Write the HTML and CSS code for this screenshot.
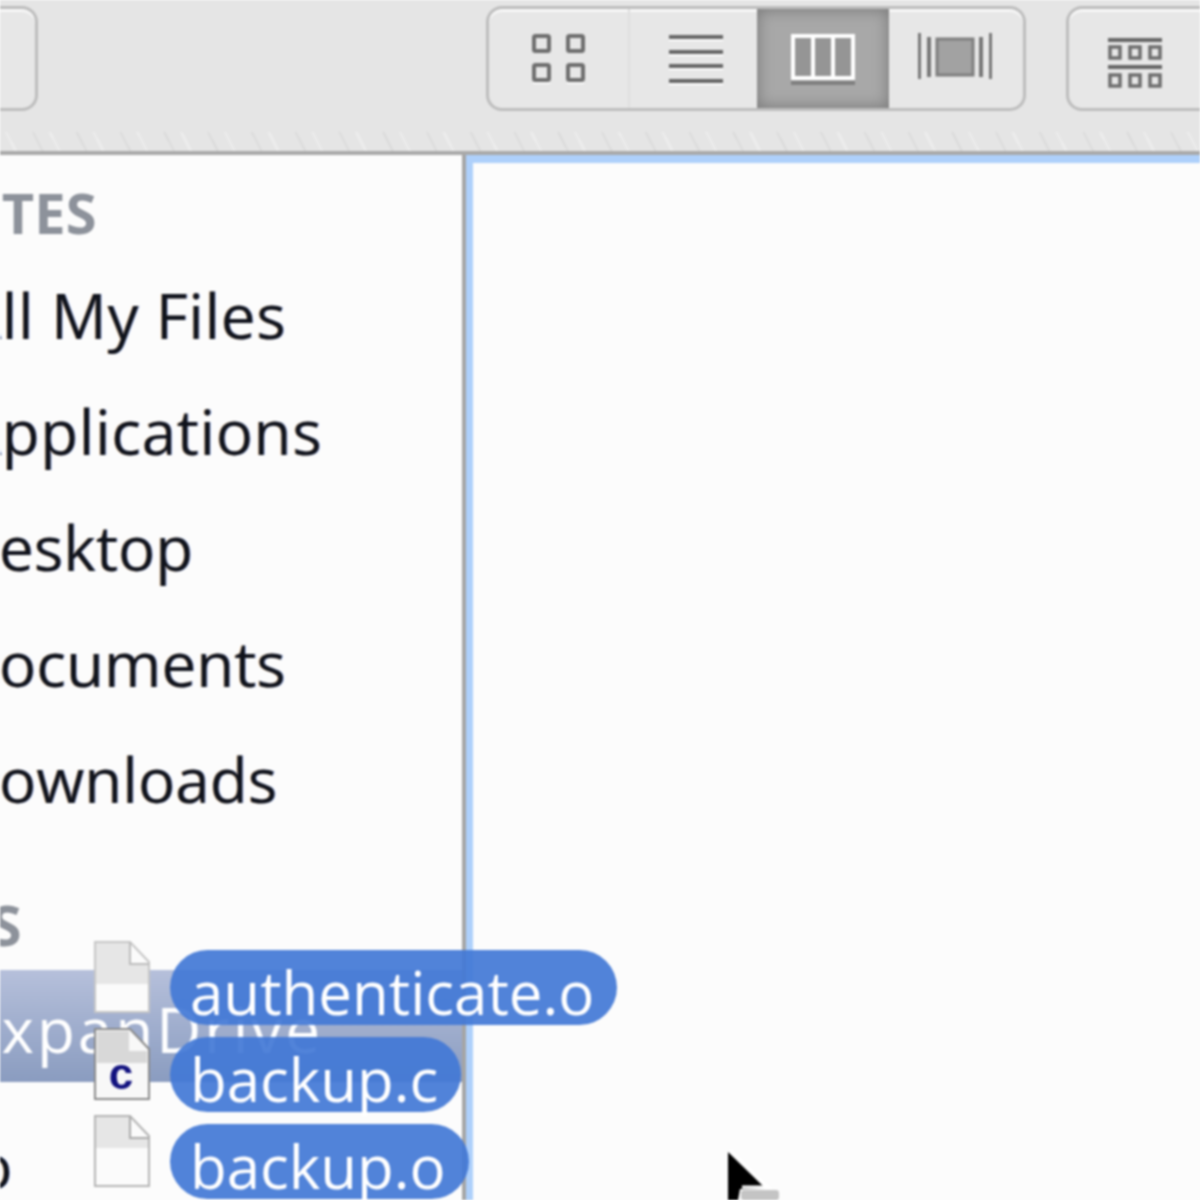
FILE: index.html
```html
<!DOCTYPE html>
<html lang="en">
<head>
<meta charset="utf-8">
<title>Finder</title>
<link rel="stylesheet" href="styles.css">
</head>
<body>
<div class="window">
  <header class="toolbar">
    <div class="btn back"></div>
    <div class="views">
      <div class="seg seg-icon">
        <svg width="56" height="50" viewBox="0 0 56 50"><g fill="none" stroke="#6e6e6e" stroke-width="4"><rect x="3" y="2" width="15" height="15" rx="1.5"/><rect x="37" y="2" width="15" height="15" rx="1.5"/><rect x="3" y="31" width="15" height="15" rx="1.5"/><rect x="37" y="31" width="15" height="15" rx="1.5"/></g><g fill="#fafafa"><rect x="2" y="48" width="17" height="2"/><rect x="36" y="48" width="17" height="2"/></g></svg>
      </div>
      <div class="seg seg-list">
        <svg width="56" height="52" viewBox="0 0 56 52"><g fill="#666"><rect x="1" y="2" width="54" height="4"/><rect x="1" y="17" width="54" height="4"/><rect x="1" y="31" width="54" height="4"/><rect x="1" y="46" width="54" height="4"/></g><g fill="#fff"><rect x="1" y="6" width="54" height="2"/><rect x="1" y="21" width="54" height="2"/><rect x="1" y="35" width="54" height="2"/><rect x="1" y="50" width="54" height="2"/></g></svg>
      </div>
      <div class="seg seg-col">
        <svg width="68" height="56" viewBox="0 0 68 56"><rect x="2" y="3" width="64" height="46" fill="#fff"/><g fill="#959595"><rect x="6" y="7" width="16" height="38"/><rect x="26" y="7" width="16" height="38"/><rect x="46" y="7" width="16" height="38"/></g><rect x="2" y="50" width="64" height="4" fill="#808080"/></svg>
      </div>
      <div class="seg seg-flow">
        <svg width="76" height="56" viewBox="0 0 76 56"><g fill="#777"><rect x="0" y="2" width="3" height="46"/><rect x="71" y="2" width="3" height="46"/><rect x="9" y="6" width="4" height="40"/><rect x="61" y="6" width="4" height="40"/></g><rect x="19" y="8" width="36" height="36" fill="#a2a2a2" stroke="#7e7e7e" stroke-width="3"/></svg>
      </div>
    </div>
    <div class="btn arrange">
      <svg width="56" height="56" viewBox="0 0 56 56"><g fill="#666"><rect x="0" y="2" width="54" height="4"/><rect x="0" y="29" width="54" height="4"/></g><g fill="none" stroke="#6e6e6e" stroke-width="3.5"><rect x="2" y="11" width="10" height="11"/><rect x="22" y="11" width="10" height="11"/><rect x="42" y="11" width="10" height="11"/><rect x="2" y="39" width="10" height="11"/><rect x="22" y="39" width="10" height="11"/><rect x="42" y="39" width="10" height="11"/></g></svg>
    </div>
  </header>
  <main class="body">
    <nav class="sidebar">
      <h2 class="head head-fav">FAVORITES</h2>
      <div class="item item-a">All My Files</div>
      <div class="item item-a">Applications</div>
      <div class="item item-d">Desktop</div>
      <div class="item item-d">Documents</div>
      <div class="item item-d">Downloads</div>
      <h2 class="head head-dev">DEVICES</h2>
      <div class="item selected">ExpanDrive</div>
      <div class="item last">Video</div>
    </nav>
    <section class="pane"></section>
  </main>
  <div class="drag">
    <div class="drag-row">
      <svg class="doc" width="58" height="76" viewBox="0 0 58 76"><path d="M2 2H37L56 22V72H2Z" fill="#fbfbfb" stroke="#c6c6c6" stroke-width="2"/><path d="M3 3H37V24H55V44H3Z" fill="#e6e6e6"/><path d="M37 2V24H56" fill="none" stroke="#bbb" stroke-width="2"/></svg>
      <span class="pill">authenticate.o</span>
    </div>
    <div class="drag-row">
      <svg class="doc" width="58" height="76" viewBox="0 0 58 76"><path d="M2 2H37L56 22V72H2Z" fill="#f8f8f8" stroke="#8a8a8a" stroke-width="2"/><path d="M4 4H36V24H54V36H4Z" fill="#d8d8d8"/><text x="28" y="62" class="doc-c">c</text></svg>
      <span class="pill">backup.c</span>
    </div>
    <div class="drag-row">
      <svg class="doc" width="58" height="76" viewBox="0 0 58 76"><path d="M2 2H37L56 22V72H2Z" fill="#fbfbfb" stroke="#b4b4b4" stroke-width="2"/><path d="M3 3H37V24H55V34H3Z" fill="#e6e6e6"/><path d="M37 2V24H56" fill="none" stroke="#aaa" stroke-width="2"/></svg>
      <span class="pill">backup.o</span>
    </div>
  </div>
  <svg class="cursor" width="70" height="52" viewBox="0 0 70 52"><rect x="25" y="42" width="38" height="10" rx="3" fill="#c4c4c4"/><path d="M12 4V52H22L24 41L49 40Z" fill="#000"/><path d="M14 2L52 39H26" fill="none" stroke="#fff" stroke-width="3"/></svg>
</div>
</body>
</html>
```
FILE: styles.css
```css
* { box-sizing: border-box; }
html, body { margin: 0; padding: 0; }
body { width: 1200px; height: 1200px; overflow: hidden; background: #fcfcfc; font-family: "Open Sans", "DejaVu Sans", sans-serif; }
.window { position: relative; width: 1200px; height: 1200px; overflow: hidden; filter: blur(1px); }

.toolbar { height: 155px; padding-top: 6px; display: flex; align-items: flex-start; border-bottom: 4px solid #a9a9a9; background:
  repeating-linear-gradient(63deg, transparent 0 13px, rgba(255,255,255,.35) 13px 15px, transparent 15px 37px, rgba(190,190,190,.25) 37px 39px) 0 132px / 100% 19px no-repeat,
  #e5e5e5; }
.btn, .views { flex: none; height: 105px; border: 3px solid #bdbdbd; border-radius: 16px; background: #e7e7e7; box-shadow: inset 0 3px 0 #f7f7f7; }
.back { width: 60px; margin-left: -22px; }
.views { display: flex; width: 540px; margin-left: 448px; overflow: hidden; }
.arrange { width: 200px; margin-left: 40px; padding: 27px 0 0 39px; }
.seg { height: 100%; display: flex; align-items: center; justify-content: center; }
.seg-icon { width: 139px; }
.seg-list { width: 129px; border-left: 2px solid #dedede; padding-left: 4px; }
.seg-col { width: 132px; background: #a8a8a8; box-shadow: inset 0 0 14px 2px #7e7e7e; }
.seg-flow { flex: 1; }

.body { display: flex; height: 1045px; }
.sidebar { width: 462px; flex: none; overflow: hidden; background: #fcfcfc; }
.head { margin: 0 0 0 -204px; height: 102px; padding-top: 17px; font-size: 56px; font-weight: 700; line-height: 80px; color: #8d929b; white-space: nowrap; }
.head-dev { margin-top: 29px; height: 104px; padding-top: 18px; }
.item { height: 116px; line-height: 116px; font-size: 62px; color: #10131c; white-space: nowrap; text-shadow: -1px 0 rgba(240,140,20,.35), 1px 0 rgba(20,90,240,.35); }
.item-a { margin-left: -38px; letter-spacing: .6px; }
.item-d { margin-left: -46px; }
.item.selected { height: 112px; line-height: 118px; text-indent: -36px; letter-spacing: 3px; color: #fff; background: linear-gradient(#b6c0db, #8a9cc0); text-shadow: none; }
.item.last { margin-top: 25px; margin-left: -150px; }

.pane { flex: 1; border-left: 4px solid #a5a5a5; box-shadow: inset 7px 8px 0 #aed0fb; background: #fcfcfc; }

.drag { position: absolute; left: 93px; top: 940px; display: flex; flex-direction: column; gap: 1px; }
.drag-row { display: flex; align-items: flex-start; gap: 19px; height: 86px; }
.doc { flex: none; }
.doc-c { font-family: "Liberation Sans", sans-serif; font-weight: 700; font-size: 44px; fill: #12127f; text-anchor: middle; }
.pill { height: 75px; margin-top: 10px; line-height: 84px; padding: 0 23px 0 20px; border-radius: 38px; font-size: 60px; color: #fff; background: rgba(66,120,214,.92); white-space: nowrap; }
.cursor { position: absolute; left: 716px; top: 1148px; }
```
